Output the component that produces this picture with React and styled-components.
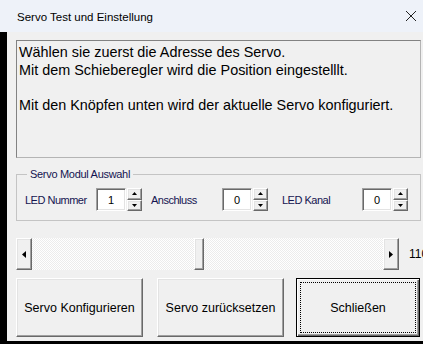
import React from "react";
import styled, { createGlobalStyle, css } from "styled-components";

const GlobalStyle = createGlobalStyle`
  html, body { margin: 0; padding: 0; }
  body {
    width: 423px;
    height: 344px;
    overflow: hidden;
    background: #f0f0f0;
    font-family: "Liberation Sans", Arial, sans-serif;
    color: #000;
  }
`;

const raised = css`
  background: #f0f0f0;
  border-style: solid;
  border-width: 1px;
  border-color: #ffffff #696969 #696969 #ffffff;
  box-shadow: inset -1px -1px 0 #a0a0a0, inset 1px 1px 0 #e3e3e3;
  box-sizing: border-box;
`;

const Window = styled.div`
  width: 423px;
  height: 344px;
  display: flex;
  flex-direction: column;
  overflow: hidden;
`;

const TitleBar = styled.div`
  height: 32px;
  flex: 0 0 32px;
  background: #eef2f9;
  display: flex;
  align-items: center;
  justify-content: space-between;
  padding: 0 6px 0 17px;
  box-sizing: border-box;
`;

const Title = styled.span`
  font-size: 11.5px;
  color: #000;
  margin-top: 1px;
`;

const CloseIcon = styled.svg`
  width: 12px;
  height: 12px;
  display: block;
`;

const Frame = styled.div`
  flex: 1;
  display: flex;
  flex-direction: column;
  background: #f0f0f0;
  border-left: 7px solid #000;
  border-bottom: 3px solid #000;
  padding: 8px 2px 0 9px;
  box-sizing: border-box;
  overflow: hidden;
`;

const InfoBox = styled.div`
  height: 118px;
  box-sizing: border-box;
  border-style: solid;
  border-width: 1px;
  border-color: #828282 #b4b4b4 #b4b4b4 #828282;
  padding: 3px 2px;
  font-size: 14.4px;
  line-height: 17.5px;
  color: #000;
`;

const InfoLine = styled.div`
  min-height: 17.5px;
  white-space: nowrap;
`;

const Group = styled.fieldset`
  margin: 10px 0 0 0;
  padding: 7px 0 9px 8px;
  border: 1px solid #c4c4c4;
  display: flex;
  align-items: center;
  min-width: 0;
`;

const Legend = styled.legend`
  font-size: 11px;
  letter-spacing: -0.3px;
  line-height: 13px;
  padding: 0 3px;
  margin-left: 2px;
  color: #141450;
`;

const FieldLabel = styled.span`
  width: ${(p) => p.$w}px;
  padding-left: ${(p) => p.$pad || 0}px;
  box-sizing: border-box;
  font-size: 11px;
  letter-spacing: -0.5px;
  color: #141450;
  white-space: nowrap;
`;

const SpinBox = styled.div`
  display: flex;
  gap: 1px;
  height: 23px;
`;

const NumInput = styled.div`
  width: 30px;
  height: 23px;
  box-sizing: border-box;
  background: #fff;
  border-style: solid;
  border-width: 1px;
  border-color: #a0a0a0 #ffffff #ffffff #a0a0a0;
  box-shadow: inset 1px 1px 0 #696969, inset -1px -1px 0 #e3e3e3;
  display: flex;
  align-items: center;
  justify-content: center;
  font-size: 11px;
  color: #000;
`;

const SpinColumn = styled.div`
  width: 15px;
  display: flex;
  flex-direction: column;
`;

const SpinBtn = styled.div`
  ${raised}
  flex: 1;
  display: flex;
  align-items: center;
  justify-content: center;
`;

const Tri = styled.svg`
  display: block;
`;

const ScrollRow = styled.div`
  margin-top: 17px;
  display: flex;
  align-items: center;
`;

const ScrollBar = styled.div`
  width: 383px;
  flex: 0 0 383px;
  height: 32px;
  display: flex;
  background: repeating-conic-gradient(#ffffff 0 25%, #ececec 0 50%) 0 0 / 2px 2px;
`;

const ArrowBtn = styled.div`
  ${raised}
  width: 16px;
  flex: 0 0 16px;
  height: 32px;
  display: flex;
  align-items: center;
  justify-content: center;
`;

const TrackPart = styled.div`
  flex: ${(p) => p.$grow} 1 0;
`;

const Thumb = styled.div`
  ${raised}
  width: 10px;
  flex: 0 0 10px;
  height: 32px;
`;

const ValueText = styled.span`
  margin-left: 10px;
  font-size: 12px;
  white-space: nowrap;
  color: #000;
`;

const ButtonRow = styled.div`
  margin-top: 8px;
  display: flex;
`;

const Button = styled.div`
  ${raised}
  position: relative;
  width: ${(p) => p.$w}px;
  flex: 0 0 ${(p) => p.$w}px;
  margin-left: ${(p) => p.$gap || 0}px;
  height: 59px;
  display: flex;
  align-items: center;
  justify-content: center;
  font-size: 12.5px;
  color: #000;
  ${(p) =>
    p.$default &&
    css`
      border: 1px solid #000;
      box-shadow: inset 1px 1px 0 #ffffff, inset -1px -1px 0 #696969,
        inset -2px -2px 0 #a0a0a0;
      &::after {
        content: "";
        position: absolute;
        inset: 3px;
        border: 1px dotted #000;
      }
    `}
`;

const Up = () => (
  <Tri width="5" height="3" viewBox="0 0 5 3">
    <polygon points="2.5,0 5,3 0,3" fill="#000" />
  </Tri>
);
const Down = () => (
  <Tri width="5" height="3" viewBox="0 0 5 3">
    <polygon points="0,0 5,0 2.5,3" fill="#000" />
  </Tri>
);
const Left = () => (
  <Tri width="4" height="7" viewBox="0 0 4 7">
    <polygon points="4,0 4,7 0,3.5" fill="#000" />
  </Tri>
);
const Right = () => (
  <Tri width="4" height="7" viewBox="0 0 4 7">
    <polygon points="0,0 4,3.5 0,7" fill="#000" />
  </Tri>
);

const Field = ({ label, w, pad, value }) => (
  <>
    <FieldLabel $w={w} $pad={pad}>
      {label}
    </FieldLabel>
    <SpinBox>
      <NumInput>{value}</NumInput>
      <SpinColumn>
        <SpinBtn>
          <Up />
        </SpinBtn>
        <SpinBtn>
          <Down />
        </SpinBtn>
      </SpinColumn>
    </SpinBox>
  </>
);

export default function App() {
  const value = 110;
  const max = 231.6;
  const frac = value / max;
  return (
    <>
      <GlobalStyle />
      <Window>
        <TitleBar>
          <Title>Servo Test und Einstellung</Title>
          <CloseIcon viewBox="0 0 12 12">
            <path d="M1 1 L11 11 M11 1 L1 11" stroke="#222" strokeWidth="1" fill="none" />
          </CloseIcon>
        </TitleBar>
        <Frame>
          <InfoBox>
            <InfoLine>Wählen sie zuerst die Adresse des Servo.</InfoLine>
            <InfoLine>Mit dem Schieberegler wird die Position eingestelllt.</InfoLine>
            <InfoLine />
            <InfoLine>Mit den Knöpfen unten wird der aktuelle Servo konfiguriert.</InfoLine>
          </InfoBox>
          <Group>
            <Legend>Servo Modul Auswahl</Legend>
            <Field label="LED Nummer" w={71} value="1" />
            <Field label="Anschluss" w={80} pad={9} value="0" />
            <Field label="LED Kanal" w={94} pad={14} value="0" />
          </Group>
          <ScrollRow>
            <ScrollBar>
              <ArrowBtn>
                <Left />
              </ArrowBtn>
              <TrackPart $grow={frac} />
              <Thumb />
              <TrackPart $grow={1 - frac} />
              <ArrowBtn>
                <Right />
              </ArrowBtn>
            </ScrollBar>
            <ValueText>110</ValueText>
          </ScrollRow>
          <ButtonRow>
            <Button $w={127}>Servo Konfigurieren</Button>
            <Button $w={127} $gap={14}>Servo zurücksetzen</Button>
            <Button $w={124} $gap={12} $default>
              Schließen
            </Button>
          </ButtonRow>
        </Frame>
      </Window>
    </>
  );
}
